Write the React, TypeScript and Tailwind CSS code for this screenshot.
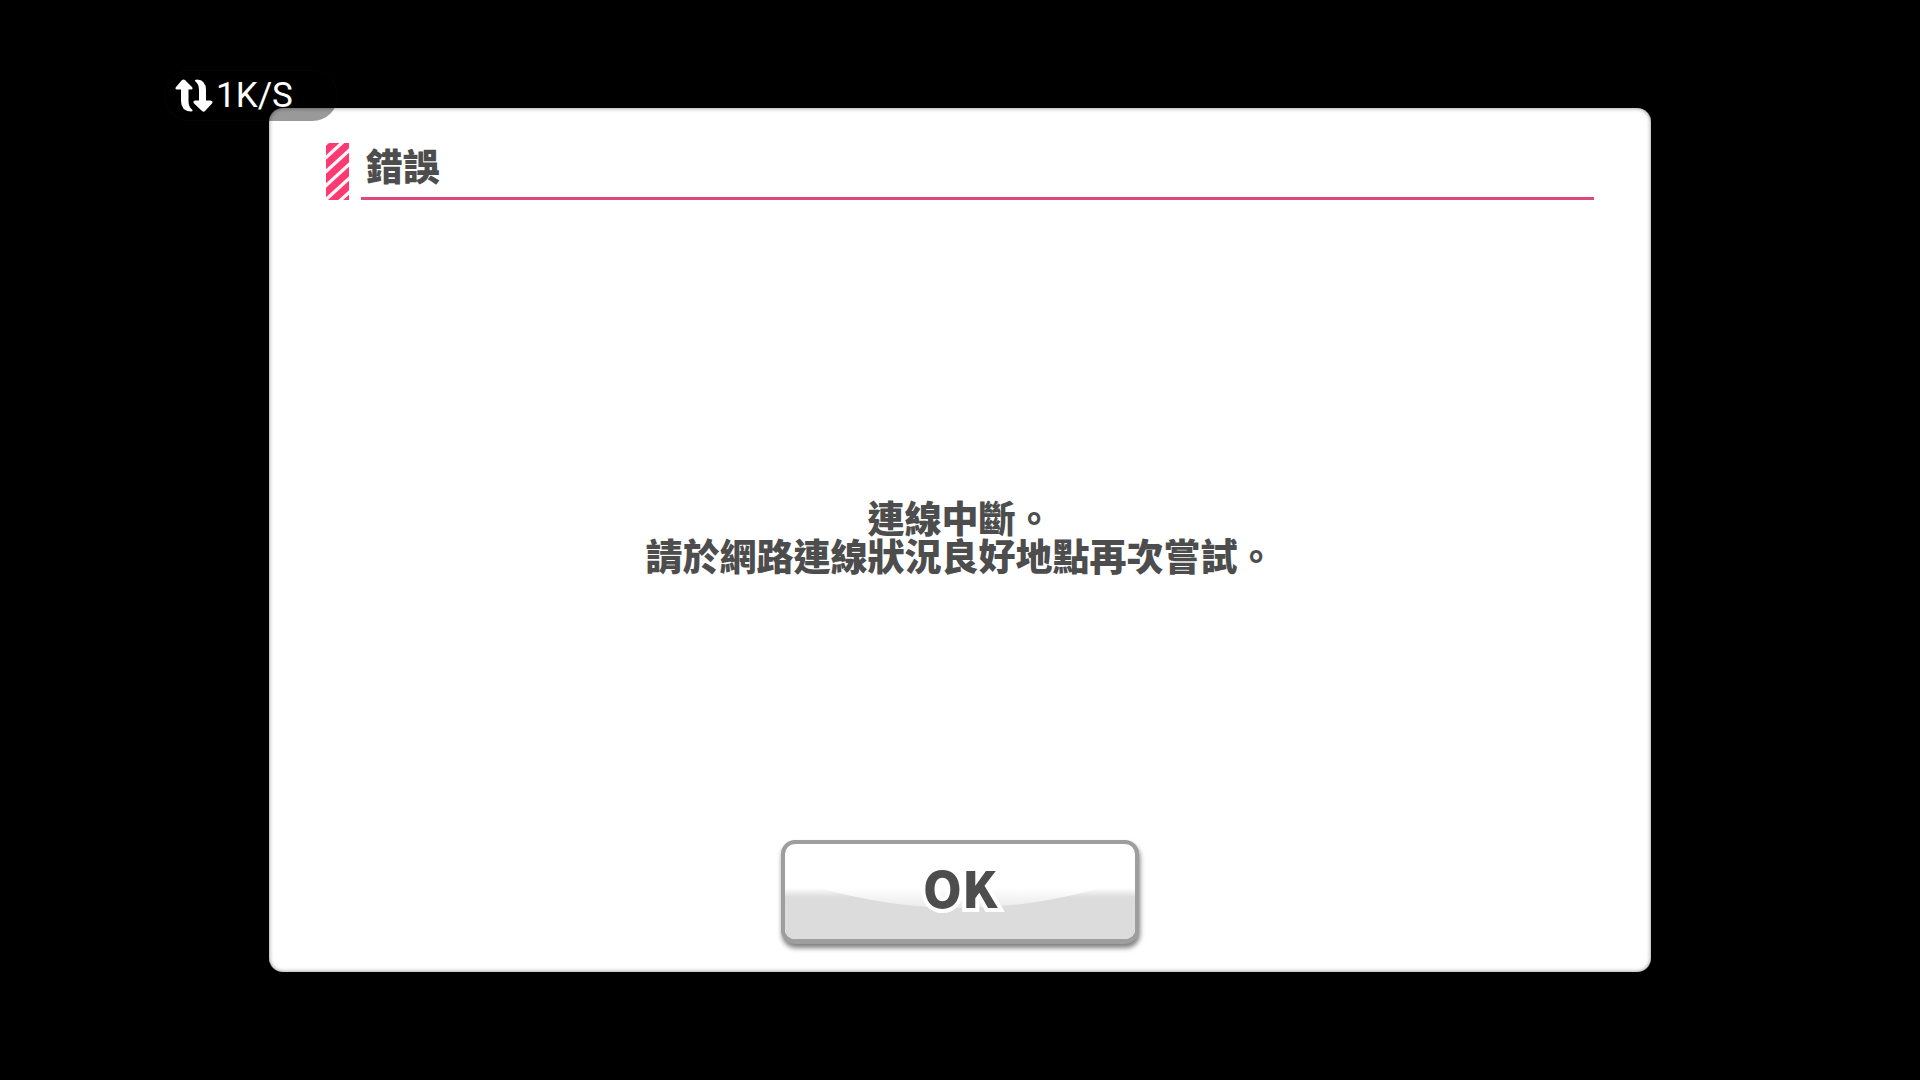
// Network Speed Badge
const NetworkSpeed = ({ speed }: { speed: string }) => {
  return (
    <div className="absolute left-[164px] top-[70px] z-10 flex h-[51px] w-[174px] items-center rounded-full border border-white/2 bg-black/40 pl-[10px] font-[Roboto,sans-serif] text-[35px] leading-none text-white">
      <svg className="h-9 w-[41px] shrink-0" viewBox="0 0 41 36" aria-hidden="true">
        <path
          fill="#fff"
          d="M7 2 Q8.500 .8 10 2 L17 9 Q18.500 11.500 16 11.500 H13.500 V23 Q13.500 29 17.500 32 Q18 33.500 16 33.500 Q6 33 6 23 V11.500 H2 Q-.5 11.500 1 9 Z"
        />
        <path
          fill="#fff"
          d="M20 3 Q19.500 1.500 22 1.500 Q31 2 31 12 V22.500 H35.500 Q38.500 23 37 25.500 L30 33 Q28.500 34.500 27 33 L19 25.500 Q17.500 23 20 22.500 H24 V12 Q24 6 20 3 Z"
        />
      </svg>
      <span>{speed}</span>
    </div>
  );
};

// Dialog Title
const DialogTitle = ({ title }: { title: string }) => {
  return (
    <header className="flex gap-3">
      <svg className="h-[57px] w-[23px] shrink-0" viewBox="0 0 23 57" aria-hidden="true">
        <rect width="23" height="57" fill="#fff5f8" />
        <g stroke="#fb3a72" strokeWidth="7">
          <path d="M-6 13 L29 -19" />
          <path d="M-6 27 L29 -5" />
          <path d="M-6 41 L29 9" />
          <path d="M-6 55 L29 23" />
          <path d="M-6 69 L29 37" />
          <path d="M-6 83 L29 51" />
        </g>
      </svg>
      <h1
        id="dialog-title"
        className="flex-1 border-b-[3px] border-[#e0487c] pl-[5px] text-[37px] leading-[44px] font-black"
      >
        {title}
      </h1>
    </header>
  );
};

// Glossy Button
const GlossyButton = ({ label }: { label: string }) => {
  return (
    <button
      type="button"
      className="relative h-[104px] w-[358px] cursor-pointer overflow-hidden rounded-[14px] border-4 border-b-5 border-[#9e9e9e] bg-white shadow-[1px_4px_5px_rgba(0,0,0,0.5)]"
    >
      <svg
        className="absolute inset-0 h-full w-full"
        viewBox="0 0 350 95"
        preserveAspectRatio="none"
        aria-hidden="true"
      >
        <defs>
          <linearGradient id="gloss" gradientUnits="userSpaceOnUse" x1="0" y1="44" x2="0" y2="62">
            <stop offset="0" stopColor="#fff" />
            <stop offset="1" stopColor="#ececec" />
          </linearGradient>
          <linearGradient id="base" gradientUnits="userSpaceOnUse" x1="0" y1="44" x2="0" y2="53">
            <stop offset="0" stopColor="#fff" />
            <stop offset="1" stopColor="#dcdcdc" />
          </linearGradient>
        </defs>
        <rect y="44" width="350" height="20" fill="url(#gloss)" />
        <path fill="url(#base)" d="M0 44 H35 Q105 64 175 64 Q245 64 315 44 H350 V95 H0 Z" />
      </svg>
      <span className="relative block pb-3 text-[50px] leading-none font-black [paint-order:stroke_fill] [-webkit-text-stroke:8px_#fff]">
        {label}
      </span>
    </button>
  );
};

/**
 * Connection Error Screen
 */
const App = () => {
  return (
    <main className="relative flex min-h-screen items-center justify-center bg-black font-['Noto_Sans_CJK_TC',sans-serif] text-[#4d4d4d]">
      <NetworkSpeed speed="1K/S" />
      <section
        role="alertdialog"
        aria-labelledby="dialog-title"
        aria-describedby="dialog-message"
        className="flex min-h-[80vh] w-[72%] flex-col rounded-[14px] bg-white px-[57px] pt-[35px] pb-7 shadow-[inset_0_0_4px_rgba(0,0,0,0.5)]"
      >
        <DialogTitle title="錯誤" />
        <div className="flex flex-1 flex-col justify-center pt-8">
          <p id="dialog-message" className="text-center text-[37px] leading-[38px] font-black">
            連線中斷。
            <br />
            請於網路連線狀況良好地點再次嘗試。
          </p>
        </div>
        <div className="flex justify-center">
          <GlossyButton label="OK" />
        </div>
      </section>
    </main>
  );
};

// Export
export default App;
